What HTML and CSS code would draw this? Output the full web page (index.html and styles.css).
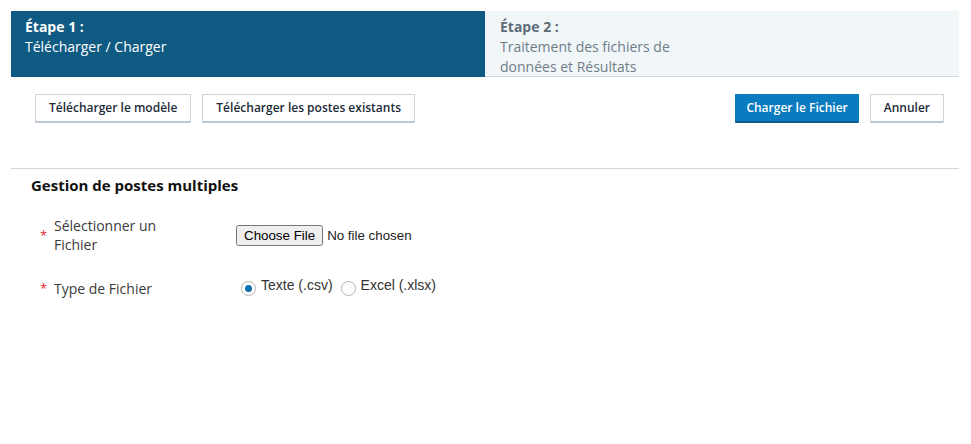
FILE: index.html
```html
<!DOCTYPE html>
<html lang="fr">
<head>
<meta charset="utf-8">
<title>Gestion de postes multiples</title>
<link rel="stylesheet" href="styles.css">
</head>
<body>
<div class="page">
  <div class="steps">
    <div class="step step-active">
      <div class="step-num">Étape 1 :</div>
      <div class="step-name">Télécharger / Charger</div>
    </div>
    <div class="step step-next">
      <div class="step-num">Étape 2 :</div>
      <div class="step-name narrow">Traitement des fichiers de données et Résultats</div>
    </div>
  </div>

  <div class="toolbar">
    <div class="group">
      <button class="btn">Télécharger le modèle</button>
      <button class="btn">Télécharger les postes existants</button>
    </div>
    <div class="group">
      <button class="btn btn-primary">Charger le Fichier</button>
      <button class="btn">Annuler</button>
    </div>
  </div>

  <div class="section">
    <h2 class="section-title">Gestion de postes multiples</h2>
    <div class="form">
      <div class="row">
        <div class="label"><span class="req">*</span><span class="label-text">Sélectionner un Fichier</span></div>
        <div class="field"><input type="file" class="file"></div>
      </div>
      <div class="row row-type">
        <div class="label"><span class="req">*</span><span class="label-text">Type de Fichier</span></div>
        <div class="field radios">
          <label class="radio"><input type="radio" name="type" checked><span>Texte (.csv)</span></label>
          <label class="radio"><input type="radio" name="type"><span>Excel (.xlsx)</span></label>
        </div>
      </div>
    </div>
  </div>
</div>
</body>
</html>
```

FILE: styles.css
```css
* { box-sizing: border-box; }
html, body { margin: 0; padding: 0; background: #fff; }
body {
  font-family: "Open Sans", "Liberation Sans", sans-serif;
  font-size: 14px;
  color: #333;
}
.page { padding: 11px 12px 0 11px; }

.steps {
  display: flex;
  height: 66px;
  border-bottom: 1px solid #cdd8e1;
}
.step {
  flex: 1 1 50%;
  padding: 6px 14px 0 15px;
  line-height: 20px;
  font-size: 14px;
}
.step-active { background: #0f5a82; color: #fff; margin-bottom: -1px; padding-left: 14px; }
.step-next { background: #f1f6f9; color: #6f7d88; }
.step-num { font-weight: 700; }
.step-next .step-num { color: #5e6c78; }
.narrow { width: 190px; }

.toolbar {
  display: flex;
  justify-content: space-between;
  padding: 17px 15px 0 24px;
  height: 92px;
  border-bottom: 1px solid #cdd8e1;
}
.group { display: flex; gap: 11px; align-items: flex-start; }
.btn {
  font-family: "Open Sans", "Liberation Sans", sans-serif;
  font-size: 12px;
  font-weight: 600;
  color: #1d2b38;
  background: #fff;
  border: 1px solid #cbd4dd;
  border-bottom: 2px solid #bcc7d1;
  border-radius: 1px;
  height: 29px;
  padding: 0 13px 1px;
  cursor: pointer;
}
.btn-primary {
  background: #0a7bbf;
  border-color: #0a7bbf;
  border-bottom-color: #0a5c8f;
  color: #fff;
  padding: 0 10px 1px;
}

.section { padding: 6px 0 0 20px; }
.section-title {
  margin: 0;
  font-size: 15px;
  font-weight: 700;
  color: #111;
  line-height: 20px;
}
.form { padding: 21px 0 0 9px; }
.row {
  display: grid;
  grid-template-columns: 196px 1fr;
  align-items: center;
  min-height: 38px;
}
.row-type { margin-top: 21px; min-height: 26px; }
.label { display: flex; align-items: center; }
.req { color: #e0282e; width: 14px; font-size: 13px; }
.label-text { width: 130px; line-height: 19px; color: #3b3b3b; }
.field { display: flex; align-items: center; }
.file {
  font-family: "Liberation Sans", Arial, sans-serif;
  font-size: 13.333px;
  color: #222;
}
.radios { gap: 8px; padding-left: 5px; }
.radio {
  display: flex;
  align-items: flex-end;
  gap: 5px;
  font-family: "Liberation Sans", Arial, sans-serif;
  font-size: 14px;
  color: #333;
}
.radio span { line-height: 16px; position: relative; top: -3px; }
.radio input {
  appearance: none;
  -webkit-appearance: none;
  margin: 0;
  width: 15px;
  height: 15px;
  border: 1px solid #b3b3b3;
  border-radius: 50%;
  background: #fff;
  display: grid;
  place-content: center;
}
.radio input:checked::before {
  content: "";
  width: 7px;
  height: 7px;
  border-radius: 50%;
  background: #0b6fb2;
}
```
